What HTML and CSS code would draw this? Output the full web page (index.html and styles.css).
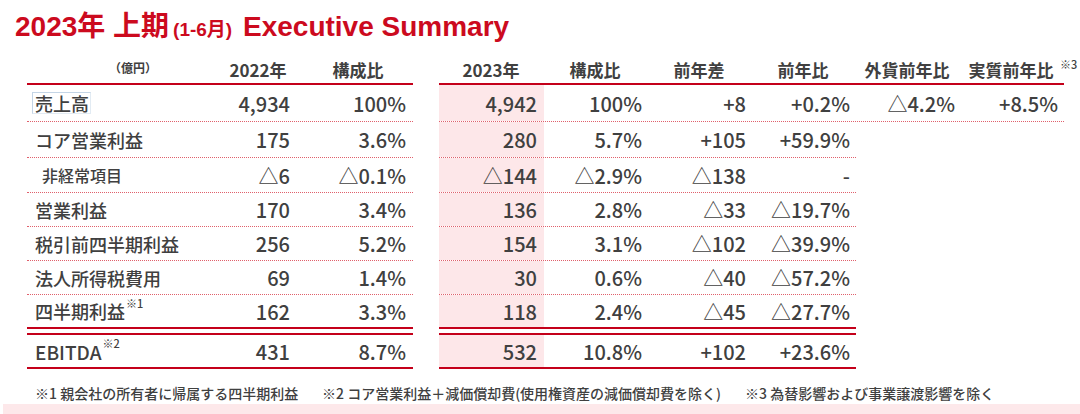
FILE: index.html
```html
<!DOCTYPE html>
<html lang="ja">
<head>
<meta charset="utf-8">
<title>2023年 上期 Executive Summary</title>
<link rel="stylesheet" href="styles.css">
</head>
<body>
<h1 class="title">2023年 上期<span class="paren">(1-6月)</span> Executive Summary</h1>
<div class="tbl">
  <div class="row head">
    <div class="grp l">
      <span class="lab unit">（億円）</span>
      <span class="c c1">2022年</span>
      <span class="c c2">構成比</span>
    </div>
    <div class="grp r wide">
      <span class="rc">2023年</span>
      <span class="rc">構成比</span>
      <span class="rc">前年差</span>
      <span class="rc">前年比</span>
      <span class="rc">外貨前年比</span>
      <span class="rc last">実質前年比<sup class="note">※3</sup></span>
    </div>
  </div>

  <div class="row r1">
    <div class="grp l">
      <span class="lab"><span class="sel">売上高</span></span>
      <span class="c c1">4,934</span>
      <span class="c c2">100%</span>
    </div>
    <div class="grp r wide">
      <span class="rc pk">4,942</span>
      <span class="rc">100%</span>
      <span class="rc">+8</span>
      <span class="rc">+0.2%</span>
      <span class="rc p5">△4.2%</span>
      <span class="rc">+8.5%</span>
    </div>
  </div>

  <div class="row r2">
    <div class="grp l">
      <span class="lab">コア営業利益</span>
      <span class="c c1">175</span>
      <span class="c c2">3.6%</span>
    </div>
    <div class="grp r">
      <span class="rc pk">280</span>
      <span class="rc">5.7%</span>
      <span class="rc">+105</span>
      <span class="rc">+59.9%</span>
    </div>
  </div>

  <div class="row r3">
    <div class="grp l">
      <span class="lab sub">非経常項目</span>
      <span class="c c1">△6</span>
      <span class="c c2">△0.1%</span>
    </div>
    <div class="grp r">
      <span class="rc pk">△144</span>
      <span class="rc">△2.9%</span>
      <span class="rc">△138</span>
      <span class="rc">-</span>
    </div>
  </div>

  <div class="row">
    <div class="grp l">
      <span class="lab">営業利益</span>
      <span class="c c1">170</span>
      <span class="c c2">3.4%</span>
    </div>
    <div class="grp r">
      <span class="rc pk">136</span>
      <span class="rc">2.8%</span>
      <span class="rc">△33</span>
      <span class="rc">△19.7%</span>
    </div>
  </div>

  <div class="row">
    <div class="grp l">
      <span class="lab">税引前四半期利益</span>
      <span class="c c1">256</span>
      <span class="c c2">5.2%</span>
    </div>
    <div class="grp r">
      <span class="rc pk">154</span>
      <span class="rc">3.1%</span>
      <span class="rc">△102</span>
      <span class="rc">△39.9%</span>
    </div>
  </div>

  <div class="row">
    <div class="grp l">
      <span class="lab">法人所得税費用</span>
      <span class="c c1">69</span>
      <span class="c c2">1.4%</span>
    </div>
    <div class="grp r">
      <span class="rc pk">30</span>
      <span class="rc">0.6%</span>
      <span class="rc">△40</span>
      <span class="rc">△57.2%</span>
    </div>
  </div>

  <div class="row r7">
    <div class="grp l">
      <span class="lab">四半期利益<sup class="note">※1</sup></span>
      <span class="c c1">162</span>
      <span class="c c2">3.3%</span>
    </div>
    <div class="grp r">
      <span class="rc pk">118</span>
      <span class="rc">2.4%</span>
      <span class="rc">△45</span>
      <span class="rc">△27.7%</span>
    </div>
  </div>

  <div class="row r8">
    <div class="grp l">
      <span class="lab"><span class="latin">EBITDA</span><sup class="note">※2</sup></span>
      <span class="c c1">431</span>
      <span class="c c2">8.7%</span>
    </div>
    <div class="grp r">
      <span class="rc pk">532</span>
      <span class="rc">10.8%</span>
      <span class="rc">+102</span>
      <span class="rc">+23.6%</span>
    </div>
  </div>
</div>

<div class="notes">
  <span>※1 親会社の所有者に帰属する四半期利益</span>
  <span>※2 コア営業利益＋減価償却費(使用権資産の減価償却費を除く)</span>
  <span>※3 為替影響および事業譲渡影響を除く</span>
</div>
<div class="band"></div>
</body>
</html>
```

FILE: styles.css
```css
html, body {
  margin: 0;
  padding: 0;
}

body {
  width: 1080px;
  height: 414px;
  overflow: hidden;
  background: #ffffff;
  color: #404040;
  font-family: "Noto Sans CJK JP", "Noto Sans", sans-serif;
}

.title {
  margin: 0;
  box-sizing: border-box;
  height: 44px;
  padding: 11px 0 0 15px;
  font-family: "Liberation Sans", "Noto Sans CJK JP", sans-serif;
  font-size: 28px;
  line-height: 32px;
  font-weight: 700;
  color: #cc0a1e;
  white-space: nowrap;
}

.title .paren {
  font-size: 19px;
  margin: 0 3px 0 4px;
}

.tbl {
  padding-left: 27px;
}

.row {
  display: flex;
  gap: 26px;
  height: 34px;
}

.grp {
  display: flex;
  align-items: stretch;
  box-sizing: border-box;
  border-bottom: 1px dotted #e0606c;
}

.grp.l {
  width: 386px;
}

.grp.r {
  width: 417px;
}

.grp.r.wide {
  width: 625px;
}

.lab,
.c,
.rc {
  display: flex;
  align-items: center;
  box-sizing: border-box;
  white-space: nowrap;
}

.lab {
  width: 186px;
  padding-left: 8px;
  font-size: 18px;
  font-weight: 500;
}

.lab.sub {
  padding-left: 15px;
  font-size: 16px;
}

.latin {
  font-size: 19px;
}

.c,
.rc {
  justify-content: flex-end;
  font-size: 20px;
  font-weight: 500;
}

.c1 {
  width: 90px;
  padding-right: 13px;
}

.c2 {
  width: 110px;
  padding-right: 7px;
}

.rc {
  width: 104px;
  padding-right: 6px;
}

.rc.pk {
  width: 105px;
  padding-right: 7px;
  background: #fde7e9;
}

.rc.p5 {
  padding-right: 5px;
}

.sel {
  border: 1px solid #c4d5e6;
  border-right-color: #e2ebf3;
  border-bottom-color: #e2ebf3;
  padding: 0 1px 0 2px;
  margin-left: -3px;
  line-height: 20px;
}

.note {
  font-size: 11px;
  font-weight: 500;
  vertical-align: 0;
  position: relative;
  top: -8px;
  margin-left: 1px;
}

/* header row */
.row.head {
  height: 41px;
}

.row.head .grp {
  border-bottom: 2px solid #c4001a;
}

.row.head .lab,
.row.head .c,
.row.head .rc {
  align-items: flex-end;
  justify-content: center;
  padding: 0 0 1px 0;
  font-size: 17px;
  font-weight: 700;
  line-height: 24px;
}

.row.head .lab.unit {
  justify-content: flex-start;
  padding-left: 82px;
  padding-bottom: 3px;
  font-size: 12px;
}

.row.head .rc.last {
  position: relative;
}

.row.head .rc.last .note {
  position: absolute;
  top: auto;
  left: 100%;
  margin-left: -3px;
  bottom: 12px;
  line-height: 14px;
}

/* body rows */
.row.r1 { height: 37px; }
.row.r2 { height: 36px; }
.row.r3 { height: 35px; }

.row.r7 .grp {
  border-bottom: 2px solid #c4001a;
}

.row.r8 {
  height: 36px;
  margin-top: 4px;
}

.row.r8 .grp {
  border-top: 2px solid #c4001a;
  border-bottom: 2px solid #c4001a;
}

/* footnotes */
.notes {
  display: grid;
  grid-template-columns: 287px 423px auto;
  margin-top: 14px;
  padding-left: 35px;
  font-size: 14px;
  line-height: 20px;
  font-weight: 500;
  white-space: nowrap;
}

.band {
  margin: 1px 0 0 3px;
  height: 10px;
  background: #fde8ea;
}
```
